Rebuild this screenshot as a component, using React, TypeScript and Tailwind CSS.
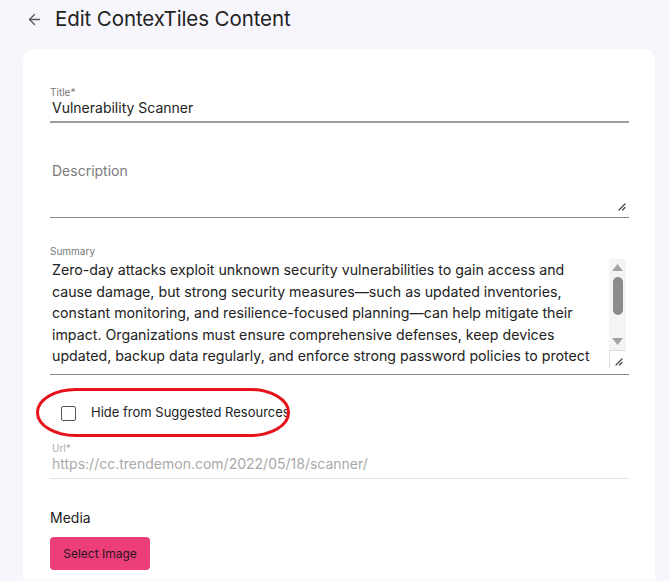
import React from 'react';
import { ArrowLeft } from 'lucide-react';

const summaryLines = [
  'Zero-day attacks exploit unknown security vulnerabilities to gain access and',
  'cause damage, but strong security measures\u2014such as updated inventories,',
  'constant monitoring, and resilience-focused planning\u2014can help mitigate their',
  'impact. Organizations must ensure comprehensive defenses, keep devices',
  'updated, backup data regularly, and enforce strong password policies to protect',
];

function ResizeGrip() {
  return (
    <svg width="9" height="9" viewBox="0 0 9 9" className="text-[#444]">
      <path d="M8 2 L2 8 M8 5.5 L5.5 8" stroke="currentColor" strokeWidth="1.2" strokeLinecap="round" />
    </svg>
  );
}

function Scrollbar() {
  return (
    <div className="w-[17px] flex flex-col">
      <div className="flex-1 bg-[#f4f4f4] flex flex-col items-center pt-[5px]">
        <svg width="11" height="7" viewBox="0 0 11 7">
          <path d="M5.5 0 L11 7 L0 7 Z" fill="#a3a3a3" />
        </svg>
        <div className="mt-[6px] w-[10px] h-[38px] rounded-full bg-[#8c8c8c]" />
        <div className="flex-1" />
        <svg width="11" height="7" viewBox="0 0 11 7" className="mb-[5px]">
          <path d="M0 0 L11 0 L5.5 7 Z" fill="#a3a3a3" />
        </svg>
      </div>
      <div className="h-[18px] bg-white border-l border-t border-[#dcdcdc] flex items-end justify-end pr-[3px] pb-[2px]">
        <ResizeGrip />
      </div>
    </div>
  );
}

export default function App() {
  return (
    <div
      className="min-h-[581px] bg-[#f7f6fd] text-[#222]"
      style={{ fontFamily: 'Inter, "Noto Sans", "Liberation Sans", sans-serif' }}
    >
      <div className="h-[49px] flex items-start pt-[7px] pl-[26px] gap-[12px]">
        <ArrowLeft size={17} strokeWidth={1.8} className="mt-[4px] text-[#555]" />
        <h1 className="text-[20.5px] leading-[24px] tracking-[-0.1px] text-[#222]">Edit ContexTiles Content</h1>
      </div>

      <div className="ml-[23px] mr-[15px] bg-white rounded-t-[10px] pl-[27px] pr-[26px] pt-[37px] pb-[10px]">
        {/* Title */}
        <div className="border-b-2 border-[#9e9e9e] pb-[3px]">
          <div className="text-[10px] leading-[12px] text-[#777]">Title*</div>
          <div className="text-[14px] leading-[20px] pl-[2px]">Vulnerability Scanner</div>
        </div>

        {/* Description */}
        <div className="mt-[38px] border-b border-[#888] pb-[6px]">
          <div className="text-[14px] leading-[20px] text-[#7a7a7a] pl-[2px]">Description</div>
          <div className="flex justify-end pr-[3px] mt-[21px]">
            <ResizeGrip />
          </div>
        </div>

        {/* Summary */}
        <div className="mt-[27px] border-b border-[#888] pb-[6px]">
          <div className="text-[10px] leading-[12px] text-[#777]">Summary</div>
          <div className="flex mt-[2px] h-[109px]">
            <div className="flex-1 overflow-hidden text-[14.2px] leading-[21.6px] pl-[2px]">
              {summaryLines.map((l) => (
                <div key={l} className="whitespace-nowrap">{l}</div>
              ))}
            </div>
            <Scrollbar />
            <div className="w-[3px]" />
          </div>
        </div>

        {/* Checkbox */}
        <div className="relative mt-[23px] h-[30px] flex items-center pl-[11px] gap-[15px]">
          <div className="w-[15px] h-[15px] border-[1.5px] border-[#555] rounded-[2px]" />
          <span className="text-[13px] text-[#222]">Hide from Suggested Resources</span>
          <div className="absolute left-[-14px] top-[-10px] w-[254px] h-[49px] border-[3px] border-[#e5121c] rounded-[40px/24px] pointer-events-none" />
        </div>

        {/* Url */}
        <div className="mt-[14px] border-b border-[#e2e2e2] pb-[4px]">
          <div className="text-[10px] leading-[12px] text-[#aaa] pl-[2px]">Url*</div>
          <div className="text-[14px] leading-[20px] text-[#a9a9a9] pl-[2px]">https://cc.trendemon.com/2022/05/18/scanner/</div>
        </div>

        {/* Media */}
        <div className="mt-[29px] text-[14px] leading-[20px] text-[#222]">Media</div>
        <button className="mt-[9px] w-[100px] h-[33px] rounded-[4px] bg-[#ec3f7a] text-[12px] text-[#2a1520]">
          Select Image
        </button>
      </div>
    </div>
  );
}
